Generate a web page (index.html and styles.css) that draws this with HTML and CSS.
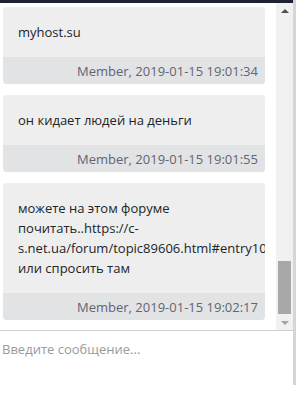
FILE: index.html
```html
<!DOCTYPE html>
<html lang="ru">
<head>
    <meta charset="UTF-8">
    <meta name="viewport" content="width=device-width, initial-scale=1.0">
    <title>Чат</title>
    <link rel="stylesheet" href="styles.css">
</head>
<body>
    <div class="frame">
        <div class="chat">
            <div class="topbar"></div>
            <div class="messages-pane">
                <div class="messages">
                    <div class="message">
                        <div class="message-body">myhost.su</div>
                        <div class="message-footer">Member, 2019-01-15 19:01:34</div>
                    </div>
                    <div class="message">
                        <div class="message-body">он кидает людей на деньги</div>
                        <div class="message-footer">Member, 2019-01-15 19:01:55</div>
                    </div>
                    <div class="message">
                        <div class="message-body">можете на этом форуме почитать..https://c-s.net.ua/forum/topic89606.html#entry10 или спросить там</div>
                        <div class="message-footer">Member, 2019-01-15 19:02:17</div>
                    </div>
                </div>
                <div class="scrollbar">
                    <span class="arrow arrow-up"></span>
                    <div class="track">
                        <div class="thumb"></div>
                    </div>
                    <span class="arrow arrow-down"></span>
                </div>
            </div>
            <textarea class="input" placeholder="Введите сообщение..."></textarea>
        </div>
    </div>
</body>
</html>
```

FILE: styles.css
```css
* {
    margin: 0;
    padding: 0;
    box-sizing: border-box;
}
body {
    font-family: "Open Sans", Arial, sans-serif;
    font-size: 13px;
    line-height: 20px;
    color: #212529;
    background: #fff;
}
.frame {
    width: 296px;
    height: 385px;
    border-right: 3px solid #d4d4da;
}
.chat {
    display: flex;
    flex-direction: column;
    height: 100%;
}
.topbar {
    height: 3px;
    background: #1f2236;
}
.messages-pane {
    display: flex;
    height: 328px;
    border-bottom: 1px solid #cfcfcf;
}
.messages {
    flex: 1;
    overflow: hidden;
    padding: 4px 11px 0 3px;
    display: flex;
    flex-direction: column;
    gap: 11px;
}
.message {
    background: #eeeeee;
    border-radius: 4px;
    overflow: hidden;
    flex-shrink: 0;
}
.message-body {
    padding: 15px 15px;
}
.message-footer {
    background: #e2e3e5;
    color: #5f6672;
    text-align: right;
    padding: 4px 7px 3px;
}
.scrollbar {
    width: 17px;
    background: #f1f1f1;
    display: flex;
    flex-direction: column;
    align-items: center;
}
.arrow {
    width: 0;
    height: 0;
    border-left: 4px solid transparent;
    border-right: 4px solid transparent;
}
.arrow-up {
    margin-top: 6px;
    border-bottom: 4px solid #505050;
}
.arrow-down {
    margin: 6px 0 5px;
    border-top: 4px solid #a3a3a3;
}
.track {
    flex: 1;
    width: 100%;
    display: flex;
    flex-direction: column;
    justify-content: flex-end;
    align-items: center;
}
.thumb {
    width: 13px;
    height: 53px;
    background: #a8a8a8;
    margin-bottom: 1px;
}
.input {
    flex: 1;
    border: none;
    outline: none;
    resize: none;
    font-family: "Open Sans", Arial, sans-serif;
    font-size: 13px;
    line-height: 20px;
    padding: 8px 2px;
    color: #212529;
}
.input::placeholder {
    color: #9a9a9a;
}
```
